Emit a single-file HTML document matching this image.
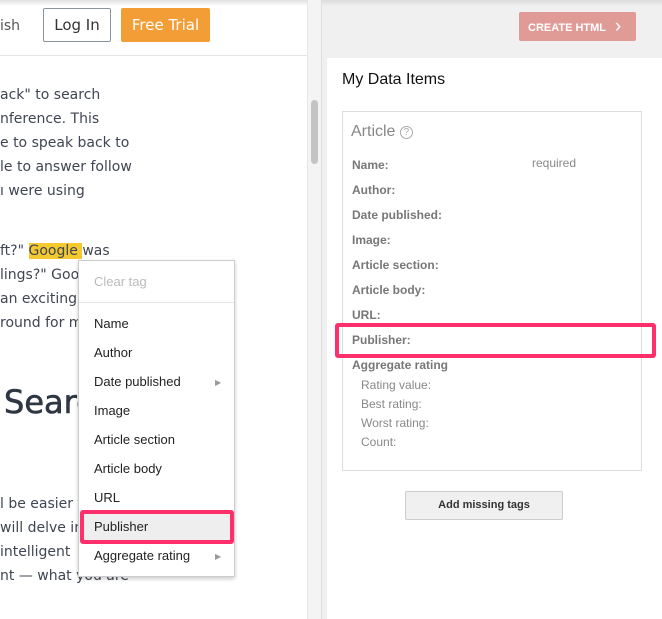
<!DOCTYPE html>
<html><head><style>
*{margin:0;padding:0;box-sizing:border-box}
body{width:662px;height:619px;overflow:hidden;background:#fff;position:relative;font-family:"Liberation Sans",Arial,sans-serif}
.a{position:absolute;white-space:nowrap}
.t{font-family:"DejaVu Sans","Liberation Sans",sans-serif;font-size:14px;color:#3f4552;left:0}
.m{font-size:13px;color:#222;left:94px}
.r{font-size:12px;font-weight:bold;color:#777;left:352px}
.s{font-size:12px;color:#888;left:361px}
</style></head><body>
<div class="a" style="left:0;top:0;width:308px;height:56px;background:#fff;border-bottom:1px solid #e4e4e4"></div>
<div class="a" style="left:0;top:0;width:662px;height:6px;background:linear-gradient(#e0e0e0,rgba(255,255,255,0))"></div>
<div class="a t" style="top:18px;font-size:14px;color:#555">ish</div>
<div class="a" style="left:43px;top:8px;width:68px;height:34px;border:1px solid #8a93a0;border-radius:2px;font-family:'DejaVu Sans',sans-serif;font-size:15px;color:#333;text-align:center;line-height:33px">Log In</div>
<div class="a" style="left:121px;top:8px;width:89px;height:34px;background:#f29d35;border-radius:2px;font-family:'DejaVu Sans',sans-serif;font-size:15px;color:#fff;text-align:center;line-height:35px">Free Trial</div>
<div class="a" style="left:307px;top:0;width:15px;height:619px;background:#f4f4f4;border-left:1px solid #e6e6e6;border-right:1px solid #ddd"></div>
<div class="a" style="left:311px;top:100px;width:7px;height:64px;background:#c4c4c4;border-radius:4px"></div>
<div class="a t" style="top:87px">ack" to search</div>
<div class="a t" style="top:111px">nference. This</div>
<div class="a t" style="top:135px">e to speak back to</div>
<div class="a t" style="top:159px">le to answer follow</div>
<div class="a t" style="top:183px">ı were using</div>
<div class="a t" style="top:243px">ft?" <span style="background:#f4c82f">Google </span>was</div>
<div class="a t" style="top:267px">lings?" Goo</div>
<div class="a t" style="top:291px"> an exciting</div>
<div class="a t" style="top:315px">round for m</div>
<div class="a t" style="top:383px;font-size:32px;color:#2f3644;left:4px;-webkit-text-stroke:0.6px #2f3644">Searc</div>
<div class="a t" style="top:496px">l be easier f</div>
<div class="a t" style="top:520px">will delve in</div>
<div class="a t" style="top:544px"> intelligent</div>
<div class="a t" style="top:568px">nt — what you are</div>
<div class="a" style="left:78px;top:260px;width:157px;height:317px;background:#fff;border:1px solid #ccc;box-shadow:0 2px 4px rgba(0,0,0,.2)"></div>
<div class="a" style="left:79px;top:302px;width:155px;height:1px;background:#e6e6e6"></div>
<div class="a m" style="top:274px;color:#bbb">Clear tag</div>
<div class="a m" style="top:316px">Name</div>
<div class="a m" style="top:345px">Author</div>
<div class="a m" style="top:374px">Date published</div>
<div class="a" style="left:215px;top:378px;font-size:8px;color:#999">▶</div>
<div class="a m" style="top:403px">Image</div>
<div class="a m" style="top:432px">Article section</div>
<div class="a m" style="top:461px">Article body</div>
<div class="a m" style="top:490px">URL</div>
<div class="a" style="left:80px;top:510px;width:154px;height:34px;background:#eee;border:4px solid #ff2f6c;border-radius:3px"></div>
<div class="a m" style="top:519px">Publisher</div>
<div class="a m" style="top:548px">Aggregate rating</div>
<div class="a" style="left:215px;top:552px;font-size:8px;color:#999">▶</div>
<div class="a" style="left:322px;top:0;width:340px;height:58px;background:#f0f0f0"></div>
<div class="a" style="left:322px;top:0;width:340px;height:6px;background:linear-gradient(#dcdcdc,rgba(240,240,240,0))"></div>
<div class="a" style="left:322px;top:58px;width:5px;height:561px;background:#f0f0f0"></div>
<div class="a" style="left:519px;top:12px;width:117px;height:29px;background:#e09b97;border-radius:2px;color:#fff;font-size:11px;font-weight:bold;line-height:29px;padding-left:9px">CREATE HTML <span style="font-size:19px;font-weight:normal;margin-left:6px;vertical-align:-1px">›</span></div>
<div class="a" style="left:342px;top:71px;font-size:16px;color:#111">My Data Items</div>
<div class="a" style="left:342px;top:111px;width:300px;height:360px;border:1px solid #ddd"></div>
<div class="a" style="left:351px;top:123px;font-size:16px;color:#888">Article <span style="display:inline-block;width:13px;height:13px;border:1px solid #aaa;border-radius:50%;font-size:10px;text-align:center;line-height:12px;color:#aaa;vertical-align:1px">?</span></div>
<div class="a" style="left:532px;top:156px;font-size:12px;color:#888">required</div>
<div class="a r" style="top:158px">Name:</div>
<div class="a r" style="top:183px">Author:</div>
<div class="a r" style="top:208px">Date published:</div>
<div class="a r" style="top:233px">Image:</div>
<div class="a r" style="top:258px">Article section:</div>
<div class="a r" style="top:283px">Article body:</div>
<div class="a r" style="top:308px">URL:</div>
<div class="a" style="left:335px;top:323px;width:321px;height:35px;border:4px solid #ff2f6c;border-radius:3px"></div>
<div class="a r" style="top:333px">Publisher:</div>
<div class="a r" style="top:358px">Aggregate rating</div>
<div class="a s" style="top:378px">Rating value:</div>
<div class="a s" style="top:397px">Best rating:</div>
<div class="a s" style="top:416px">Worst rating:</div>
<div class="a s" style="top:435px">Count:</div>
<div class="a" style="left:405px;top:491px;width:158px;height:29px;background:#f0f0f0;border:1px solid #ccc;border-radius:2px;font-size:11px;font-weight:bold;color:#333;text-align:center;line-height:27px">Add missing tags</div>
</body></html>
